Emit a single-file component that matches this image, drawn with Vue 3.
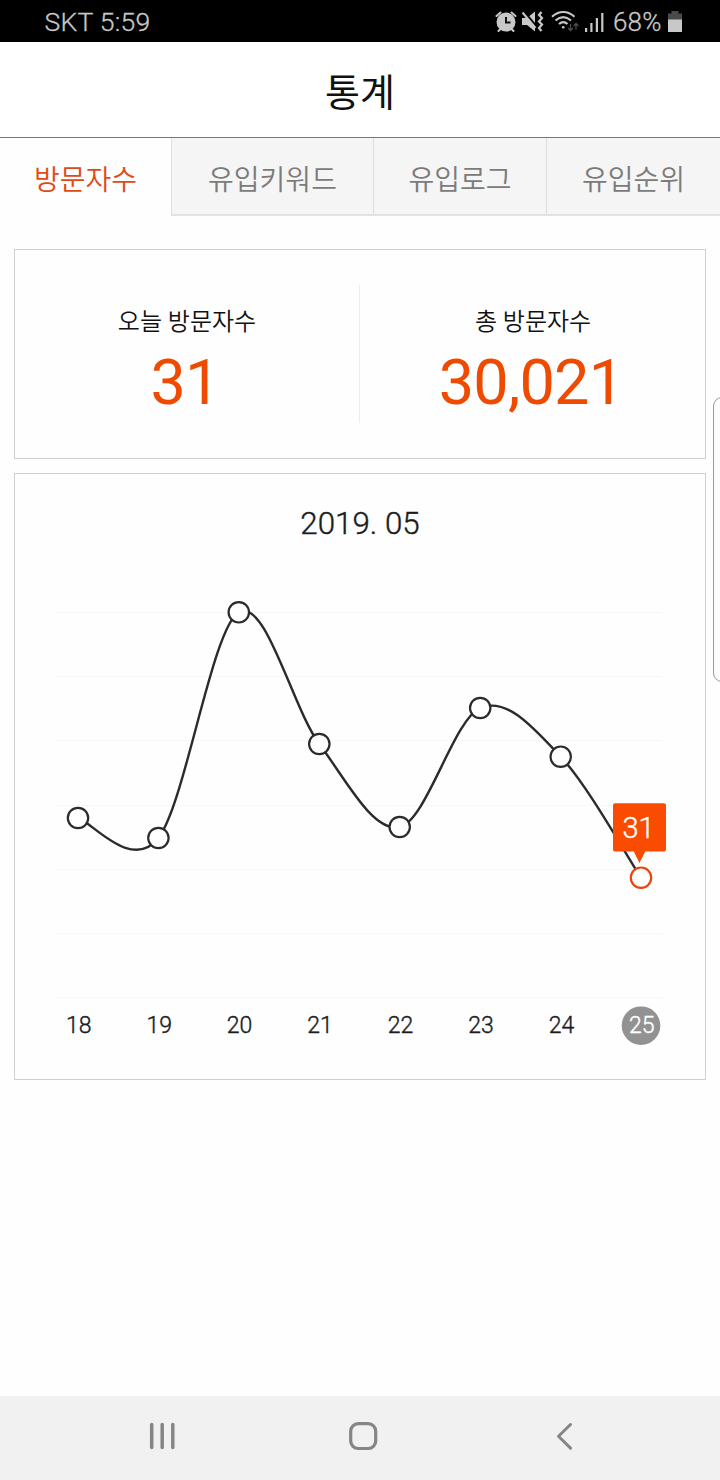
<script setup>
const tabs = [
  { label: '방문자수', cls: 'tab-visitors' },
  { label: '유입키워드', cls: 'tab-keywords' },
  { label: '유입로그', cls: 'tab-log' },
  { label: '유입순위', cls: 'tab-rank' },
]

const points = [
  { day: 18, x: 78, y: 818 },
  { day: 19, x: 158.4, y: 838 },
  { day: 20, x: 238.8, y: 612.3 },
  { day: 21, x: 319.3, y: 744 },
  { day: 22, x: 399.7, y: 827 },
  { day: 23, x: 480.2, y: 708 },
  { day: 24, x: 560.7, y: 756.7 },
  { day: 25, x: 641, y: 877.7 },
]
const gridLines = [612.5, 676.5, 740.5, 805.5, 869.5, 933.5, 997.5]
const last = points.length - 1

// Catmull-Rom spline expressed as cubic segments
const curve = points.slice(0, -1).reduce((path, p, i) => {
  const prev = points[Math.max(i - 1, 0)]
  const next = points[i + 1]
  const after = points[Math.min(i + 2, last)]
  const c1 = [p.x + (next.x - prev.x) / 6, p.y + (next.y - prev.y) / 6]
  const c2 = [next.x - (after.x - p.x) / 6, next.y - (after.y - p.y) / 6]
  return `${path} C${c1} ${c2} ${next.x},${next.y}`
}, `M${points[0].x},${points[0].y}`)
</script>

<template>
  <div class="screen">
    <header class="status">
      <span class="clock">SKT 5:59</span>
      <div class="status-right">
        <svg class="indicators" width="112" height="26" viewBox="494 8 112 26">
          <g fill="none" stroke="#c8c8c8" stroke-width="2" stroke-linecap="round">
            <circle cx="506" cy="21" r="8.5" fill="#c8c8c8" />
            <path d="M496.5 15l4-3.5M515.5 15l-4-3.5M500.5 28l-2 2M511.5 28l2 2" />
            <path d="M506 16v5.5h4.5" stroke="#111" stroke-linecap="butt" />
          </g>
          <g>
            <path d="M522 17h5l8-6.5v20l-8-6.5h-5z" fill="#c8c8c8" />
            <path d="M524 10.500l13 15.500" stroke="#000" stroke-width="2" />
            <path d="M522.500 11.500l13 15.500" stroke="#c8c8c8" stroke-width="2" />
            <path d="M541.5 11l-2.5 3 3 3-3 3.500 3 3-3 3.500 2.500 3" fill="none" stroke="#c8c8c8" stroke-width="2.200" />
          </g>
          <g fill="none" stroke="#c8c8c8" stroke-width="2.100">
            <path d="M552 15.800C558.500 9.300 568 9.300 574.500 15.800" />
            <path d="M555.500 19.500Q563.200 12.800 571 19.500" />
            <path d="M559 23Q563.200 19.300 567.500 23" />
            <circle cx="563.200" cy="26.300" r="1.300" fill="#c8c8c8" stroke="none" />
          </g>
          <path d="M570.500 23v6M568 27l2.500 2.500 2.500-2.500M576 28.500v-6M573.500 25l2.500-2.500 2.500 2.500" fill="none" stroke="#4d4d4d" stroke-width="1.300" />
          <g fill="#c8c8c8">
            <path d="M585 27h2.200v4H585zM590.300 22h2.200v9h-2.200zM595.800 17h2.200v14h-2.200zM601.200 12h2.200v19h-2.200z" />
          </g>
        </svg>
        <span class="percent">68%</span>
        <svg class="battery" width="16" height="22" viewBox="0 0 16 22">
          <path d="M4.500 0h7v2.500H15V9H1V2.500h3.500z" fill="#4a4a4a" />
          <path d="M1 8.500h14V21H1z" fill="#c8c8c8" />
        </svg>
      </div>
    </header>

    <h1 class="title">통계</h1>

    <nav class="tabs">
      <a v-for="(tab, i) in tabs" :key="tab.label" class="tab" :class="[tab.cls, { active: i === 0 }]">{{ tab.label }}</a>
    </nav>

    <main class="content">
      <section class="card summary">
        <div class="stat">
          <span class="stat-label">오늘 방문자수</span>
          <strong class="stat-value">31</strong>
        </div>
        <div class="divider"></div>
        <div class="stat stat-total">
          <span class="stat-label">총 방문자수</span>
          <strong class="stat-value">30,021</strong>
        </div>
      </section>

      <section class="card chart">
        <svg class="plot" width="690" height="605" viewBox="15 474 690 605">
          <text class="month" x="360" y="533.500" text-anchor="middle">2019. 05</text>
          <path v-for="y in gridLines" :key="y" :d="`M56 ${y}H662`" stroke="#f7f7f7" />
          <path :d="curve" fill="none" stroke="#2b2b2b" stroke-width="2.400" />
          <circle
            v-for="(p, i) in points" :key="p.day" :cx="p.x" :cy="p.y" r="10.200"
            fill="#fff" :stroke="i === last ? '#e8450c' : '#2b2b2b'" stroke-width="2.200"
          />
          <path d="M615 803.300h49q2 0 2 2v44.200q0 2-2 2h-18.800l-5.700 11.500-5.700-11.500H615q-2 0-2-2v-44.200q0-2 2-2z" fill="#f94c00" />
          <text class="tip" x="638.500" y="838" text-anchor="middle">31</text>
          <circle cx="641" cy="1025.700" r="19.300" fill="#929292" />
          <text
            v-for="(p, i) in points" :key="`d${p.day}`" class="day" :class="{ today: i === last }"
            :x="p.x + 0.800" y="1033" text-anchor="middle"
          >{{ p.day }}</text>
        </svg>
      </section>
    </main>

    <div class="edge-handle"></div>

    <footer class="navbar">
      <svg width="720" height="84" viewBox="0 1396 720 84" fill="none" stroke="#858585" stroke-linecap="round" stroke-linejoin="round">
        <path d="M151.700 1424.500v23M162.200 1424.500v23M172.800 1424.500v23" stroke-width="3.500" />
        <rect x="350.700" y="1423.700" width="25" height="24.800" rx="7.500" stroke-width="3.200" />
        <path d="M570.500 1424.500l-12 11.800 12 11.800" stroke-width="3" />
      </svg>
    </footer>
  </div>
</template>

<style>
body {
  margin: 0;
  background: #fefefe;
}
</style>

<style scoped>
.screen {
  position: relative;
  display: flex;
  flex-direction: column;
  width: 720px;
  height: 1480px;
  overflow: hidden;
  background: #fefefe;
  color: #111;
  font-family: Roboto, "Noto Sans CJK KR", sans-serif;
  white-space: nowrap;
}
.status {
  display: flex;
  justify-content: space-between;
  align-items: center;
  box-sizing: border-box;
  height: 42px;
  padding: 1px 37px 0 44.500px;
  background: #000;
  color: #c8c8c8;
  font-size: 26px;
}
.clock,
.percent {
  font-weight: 300;
  line-height: 42px;
  -webkit-text-stroke: 0.300px #c8c8c8;
}
.clock {
  font-size: 26.500px;
  letter-spacing: 0.250px;
}
.percent {
  width: 54px;
  letter-spacing: 0.200px;
}
.status-right {
  display: flex;
  align-items: center;
}
.indicators {
  margin-right: 7px;
}
.title {
  box-sizing: border-box;
  height: 96px;
  margin: 0;
  border-bottom: 1px solid #777;
  background: #fff;
  font-size: 38px;
  font-weight: 400;
  line-height: 102px;
  text-align: center;
}
.tabs {
  display: flex;
  height: 78px;
}
.tab {
  box-sizing: border-box;
  border-bottom: 2px solid #e3e3e3;
  border-left: 1px solid #dedede;
  background: #f5f5f5;
  color: #7b7b7b;
  font-family: "Noto Sans CJK KR", sans-serif;
  font-size: 28px;
  font-weight: 350;
  line-height: 80px;
  text-align: center;
}
.tab.active {
  border: 0;
  background: #fefefe;
  color: #e04a18;
}
.tab-visitors { width: 171px; }
.tab-keywords { width: 202px; }
.tab-log { width: 173px; }
.tab-rank { width: 174px; }
.content {
  display: flex;
  flex: 1;
  flex-direction: column;
  gap: 14px;
  padding: 33px 14px 0;
}
.card {
  box-sizing: border-box;
  border: 1px solid #d0d0d0;
}
.summary {
  display: flex;
  align-items: center;
  height: 210px;
}
.stat {
  display: flex;
  flex: 1;
  flex-direction: column;
  align-items: center;
  padding-top: 21px;
}
.divider {
  width: 1px;
  height: 138px;
  margin-right: 1px;
  background: #ededed;
}
.stat-label {
  font-size: 24px;
  font-weight: 350;
  line-height: 36px;
}
.stat-value {
  margin-right: 4px;
  color: #ef4b00;
  font-size: 63px;
  font-weight: 400;
  letter-spacing: -0.800px;
  line-height: 85px;
}
.chart {
  height: 607px;
}
.plot {
  display: block;
}
.month,
.tip,
.day {
  font-weight: 300;
  fill: #1c1c1c;
  stroke: #1c1c1c;
  stroke-width: 0.400px;
}
.month { font-size: 31.300px; }
.tip { font-size: 29px; }
.day { font-size: 23px; }
.tip,
.day.today {
  fill: #fff;
  stroke: #fff;
}
.edge-handle {
  position: absolute;
  top: 397px;
  left: 713px;
  box-sizing: border-box;
  width: 20px;
  height: 285px;
  border: 1px solid #999;
  border-radius: 9px;
  background: #fcfcfc;
}
.navbar {
  height: 84px;
  background: #f1f1f1;
}
.navbar svg {
  display: block;
}
</style>
